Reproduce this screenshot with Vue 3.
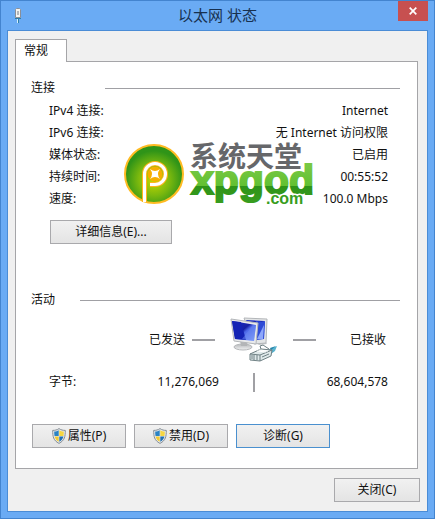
<template>
    <main class="dialog">
        <header class="title-bar">
            <svg class="title-icon" width="8" height="15" viewBox="0 0 8 15" aria-hidden="true">
                <path d="M1.5 1.5 2.5.5h3l1 1v8h-5z" fill="#f4f4f0" stroke="#8a8f98"/>
                <path d="M3 3h2v4H3z" fill="#b3b6ba"/>
                <path d="M1 10h6v1H1zM3 11h2v4H3z" fill="#2d7fa8"/>
                <path d="M3 11h1v4H3z" fill="#d8f0fa"/>
            </svg>
            <h1>以太网 状态</h1>
            <button class="close" type="button" aria-label="关闭">
                <svg width="8" height="8" viewBox="0 0 8 8"><path d="M.7.7l6.6 6.6M7.3.7.7 7.3" stroke="#fff" stroke-width="1.7"/></svg>
            </button>
        </header>

        <div class="client">
            <div class="tabs" role="tablist">
                <button class="tab" type="button" role="tab" aria-selected="true">常规</button>
            </div>

            <section class="panel" role="tabpanel">
                <h2 class="group-title wide">连接</h2>
                <dl class="details">
                    <div v-for="item in connection" :key="item.label" class="detail">
                        <dt>{{ item.label }}:</dt>
                        <dd>{{ item.value }}</dd>
                    </div>
                </dl>
                <button class="btn more" type="button">详细信息(E)...</button>

                <h2 class="group-title">活动</h2>
                <div class="activity">
                    <div class="sent">已发送<span class="dash"></span></div>
                    <svg class="computers" width="48" height="46" viewBox="0 0 48 46" aria-hidden="true">
                        <defs>
                            <linearGradient id="screen" x1="0" y1="0" x2="1" y2="1">
                                <stop offset="0" stop-color="#1c2fd0"/>
                                <stop offset=".45" stop-color="#1620a4"/>
                                <stop offset=".55" stop-color="#4c68e8"/>
                                <stop offset="1" stop-color="#9db8ff"/>
                            </linearGradient>
                            <linearGradient id="stand" x1="0" y1="0" x2="0" y2="1">
                                <stop offset="0" stop-color="#b5b7b9"/>
                                <stop offset="1" stop-color="#f1f2f3"/>
                            </linearGradient>
                        </defs>
                        <path d="M25 25l10-1 2 3-8 1z" fill="#c3c5c7"/>
                        <path d="M14 1l23 1-1 24-12 1z" fill="#e3e5e6" stroke="#b3b6b9"/>
                        <path d="M16 3l19 1-1 18-9 1z" fill="url(#screen)"/>
                        <path d="M26 4l9 1-1 17-8 1z" fill="#2f4bd6"/>
                        <path d="M27 22l7-14-1 14z" fill="#8da7fa"/>
                        <ellipse cx="13" cy="30" rx="9" ry="3" fill="url(#stand)" stroke="#b5b7ba"/>
                        <path d="M10 23h8l-1 6h-6z" fill="#b3b5b7"/>
                        <path d="M1 2l27 4-2 21L4 24z" fill="#e9eaeb" stroke="#b3b6b9"/>
                        <path d="M2 4l24 4-2 16L5 22z" fill="url(#screen)"/>
                        <path d="M2 4l9 1 5 18-11-1z" fill="#1423b4"/>
                        <path d="M12 22L23 8l3 1-2 15z" fill="#6786f2" opacity=".55"/>
                        <path d="M37 33l10-4-2 5-7 5z" fill="#58b3cf"/>
                        <path d="M40 31l6-2-5 4z" fill="#2384aa"/>
                        <path d="M20 37l11-5 11 1-1 6-11 5-10-1z" fill="#dfe9ea" stroke="#6f8084"/>
                        <path d="M20 37l10 1 12-5M30 38v6M22 38v4M24 38v5M27 38v5M31 32l-1-3 3-1 6 4M32 40l7-3" fill="none" stroke="#6f8084"/>
                        <path d="M27 34l9 1M29 33l9 1" fill="none" stroke="#fff"/>
                    </svg>
                    <div class="received"><span class="dash"></span>已接收</div>

                    <div class="bytes">字节:<span>11,276,069</span></div>
                    <span class="divider"></span>
                    <div class="total">68,604,578</div>
                </div>

                <div class="actions">
                    <button v-for="action in actions" :key="action.text" class="btn" :class="{ focused: action.focused }" type="button">
                        <svg v-if="action.shield" width="14" height="16" viewBox="0 0 14 16" aria-hidden="true">
                            <path d="M7 .6C5 2 3 2.4.7 2.4c0 6 .5 10 6.3 13 5.8-3 6.3-7 6.3-13C11 2.4 9 2 7 .6z" fill="#e8eaec" stroke="#858d95"/>
                            <path d="M6.700 2.300C5.300 3.200 4 3.500 2.200 3.600c0 1.500 0 3 .3 4.400h4.200z" fill="#2b83c4"/>
                            <path d="M7.300 2.300c1.400.9 2.700 1.200 4.500 1.300 0 1.500 0 3-.3 4.400H7.300z" fill="#f6d642"/>
                            <path d="M2.600 8.500h4.100v5.200C4.300 12.400 3.100 10.800 2.600 8.500z" fill="#f2cb34"/>
                            <path d="M11.400 8.500H7.300v5.200c2.400-1.300 3.600-2.900 4.100-5.200z" fill="#2470b2"/>
                        </svg>
                        {{ action.text }}
                    </button>
                </div>

                <svg class="brand" width="194" height="82" viewBox="0 -12 194 82">
                    <defs>
                        <radialGradient id="ball" cy=".6">
                            <stop offset="0" stop-color="#c9d900"/>
                            <stop offset=".55" stop-color="#7ab80e"/>
                            <stop offset="1" stop-color="#2f9418"/>
                        </radialGradient>
                        <linearGradient id="word" x1="0" y1="0" x2="0" y2="1">
                            <stop offset=".2" stop-color="#78c843"/>
                            <stop offset=".62" stop-color="#62c032"/>
                            <stop offset=".64" stop-color="#2e9318"/>
                            <stop offset="1" stop-color="#389d20"/>
                        </linearGradient>
                    </defs>
                    <circle cx="30" cy="31" r="29" fill="url(#ball)" stroke="#ffbb22" stroke-width="2"/>
                    <path d="M20.500 59V31a10.500 10.500 0 1 1 10.500 10.500h-5" fill="none" stroke="#ffb51c" stroke-width="5"/>
                    <path d="M20.500 59V31a10.500 10.500 0 1 1 10.500 10.500h-5" fill="none" stroke="#fff" stroke-width="3"/>
                    <circle cx="31" cy="31" r="7.500" fill="#f6ae00"/>
                    <path d="M26 26q5 4 10 0-4 5 0 10-5-4-10 0 4-5 0-10z" fill="#fff"/>
                    <text class="brand-name" x="66" y="24">系统天堂</text>
                    <text class="brand-word" x="67" y="51">xpgod</text>
                    <text class="brand-com" x="142" y="61">.com</text>
                </svg>
            </section>

            <footer class="footer">
                <button class="btn" type="button">关闭(C)</button>
            </footer>
        </div>
    </main>
</template>


<script setup>
const connection = [
    { label: 'IPv4 连接', value: 'Internet' },
    { label: 'IPv6 连接', value: '无 Internet 访问权限' },
    { label: '媒体状态', value: '已启用' },
    { label: '持续时间', value: '00:55:52' },
    { label: '速度', value: '100.0 Mbps' },
]

const actions = [
    { text: '属性(P)', shield: true },
    { text: '禁用(D)', shield: true },
    { text: '诊断(G)', focused: true },
]
</script>


<style>
body {
    margin: 0;
}
</style>

<style scoped>
.dialog {
    display: flex;
    flex-direction: column;
    box-sizing: border-box;
    min-height: 100vh;
    padding: 0 6px 6px;
    border: 1px solid #4384cf;
    background: #6aabf4;
    color: #111;
    font-family: "Noto Sans", "Noto Sans CJK SC", sans-serif;
    font-size: 12px;
    line-height: 22px;
}

h1, h2, dl, dd {
    margin: 0;
    font-weight: 400;
}

.title-bar {
    display: grid;
    grid-template-columns: 30px 1fr 30px;
    height: 29px;
}
.title-icon {
    margin: 7px 0 0 7px;
}
.title-bar h1 {
    color: #17304f;
    font-size: 15px;
    line-height: 28px;
    text-align: center;
}
.close {
    display: flex;
    align-items: center;
    justify-content: center;
    height: 20px;
    padding: 0;
    border: 0;
    background: #c75050;
}

.client {
    flex: 1;
    padding: 8px 7px 9px;
    border: 1px solid #4a8cd6;
    background: #f0f0f0;
}

.tabs {
    display: flex;
}
.tab {
    z-index: 1;
    height: 23px;
    margin-bottom: -1px;
    padding: 0 18px 2px 8px;
    border: 1px solid #a5a5a8;
    border-bottom: 0;
    background: #fff;
    color: inherit;
    font: inherit;
}

.panel {
    position: relative;
    margin-right: 2px;
    padding: 15px 17px 20px 15px;
    border: 1px solid #a5a5a8;
    background: #fff;
}

.group-title {
    display: flex;
    align-items: center;
    gap: 25px;
    font-size: 12px;
}
.group-title::after {
    content: "";
    flex: 1;
    height: 1px;
    background: #a0a0a4;
}
.group-title.wide {
    gap: 50px;
}

.details {
    margin: 1px 12px 0 18px;
}
.detail {
    display: flex;
    justify-content: space-between;
}

.btn {
    display: flex;
    align-items: center;
    justify-content: center;
    gap: 2px;
    box-sizing: border-box;
    width: 94px;
    height: 24px;
    padding: 0;
    border: 1px solid #a9a9ac;
    background: linear-gradient(#f1f1f1, #e4e4e4);
    color: inherit;
    font: inherit;
}
.btn.focused {
    border-color: #4a90cf;
}
.more {
    width: 122px;
    margin: 10px 0 45px 19px;
}

.activity {
    display: grid;
    grid-template-columns: 12fr 70px 7fr;
    row-gap: 8px;
    align-items: center;
    margin: 6px 12px 0 18px;
}
.sent {
    display: flex;
    align-items: center;
    justify-content: flex-end;
    gap: 7px;
    padding-right: 4px;
}
.received {
    display: flex;
    align-items: center;
    justify-content: space-between;
    padding: 0 2px 0 4px;
}
.dash {
    width: 23px;
    height: 2px;
    background: #a0a0a4;
}
.computers {
    justify-self: center;
}
.bytes {
    display: flex;
    justify-content: space-between;
}
.divider {
    justify-self: center;
    width: 2px;
    height: 19px;
    background: #a0a0a4;
}
.total {
    text-align: right;
}

.actions {
    display: flex;
    gap: 8px;
    margin: 31px 0 0 1px;
}

.brand {
    position: absolute;
    top: 69px;
    left: 108px;
}
.brand-name {
    fill: #66676a;
    font-family: "Noto Sans CJK SC", sans-serif;
    font-size: 28px;
    font-weight: 700;
}
.brand-word {
    fill: url(#word);
    stroke: url(#word);
    stroke-width: 2px;
    font-family: "Liberation Sans", sans-serif;
    font-size: 41px;
    font-weight: 700;
}
.brand-com {
    fill: #389d20;
    stroke: #fff;
    stroke-width: 3px;
    paint-order: stroke;
    font-family: "Liberation Sans", sans-serif;
    font-size: 16px;
    font-weight: 700;
}

.footer {
    display: flex;
    justify-content: flex-end;
    margin-top: 9px;
}
.footer .btn {
    width: 86px;
}
</style>
